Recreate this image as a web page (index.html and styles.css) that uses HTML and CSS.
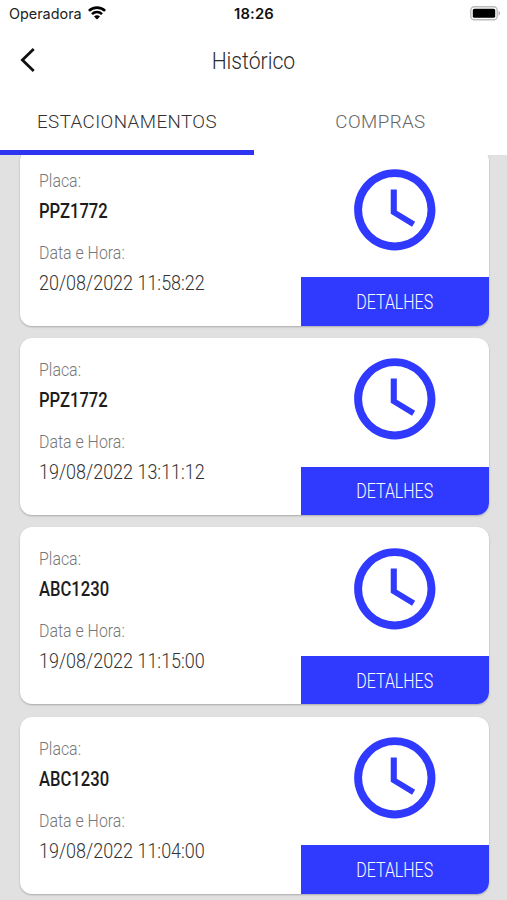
FILE: index.html
```html
<!DOCTYPE html>
<html lang="pt-BR">
<head>
<meta charset="utf-8">
<title>Histórico</title>
<link rel="stylesheet" href="styles.css">
</head>
<body>
<svg class="symbols" aria-hidden="true">
  <symbol id="clock" viewBox="0 0 24 24"><path d="M11.99 2C6.47 2 2 6.48 2 12s4.47 10 9.99 10C17.52 22 22 17.52 22 12S17.52 2 11.99 2zM12 20.05a8.05 8.05 0 1 1 0-16.1 8.05 8.05 0 0 1 0 16.1z"/><path d="M12.5 7H11v6l5.25 3.15.75-1.23-4.5-2.67z"/></symbol>
</svg>
<div class="screen">
  <header class="header">
    <div class="status">
      <div class="carrier"><span>Operadora</span>
        <svg class="wifi" viewBox="0 0 18 14" fill="none" stroke="#000" stroke-width="2.6"><path d="M.9 4.9C5.4.5 12.6.5 17.1 4.9"/><path d="M4 8.1c2.8-2.8 7.2-2.8 10 0"/><path d="M9 13.6 6 10.6a4.2 4.2 0 0 1 6 0z" fill="#000" stroke="none"/></svg>
      </div>
      <div class="time">18:26</div>
      <svg class="battery" viewBox="0 0 31 15"><rect x=".8" y=".8" width="26.4" height="13" rx="3.6" fill="#fff" stroke="#bbb" stroke-width="1.4"/><rect x="2.8" y="2.8" width="22.4" height="9" rx="1.6"/><path d="M28.6 5v4.6c1.9-.7 1.9-3.9 0-4.6z" fill="#aaa"/></svg>
    </div>
    <div class="nav">
      <svg class="back" viewBox="0 0 16 24" fill="none" stroke="#111" stroke-width="2.8"><path d="M13.7 1 2.4 12l11.3 11"/></svg>
      <h1 class="title"><span>Histórico</span></h1>
    </div>
    <nav class="tabs">
      <a class="tab active"><span>ESTACIONAMENTOS</span></a>
      <a class="tab"><span>COMPRAS</span></a>
    </nav>
  </header>
  <main class="list">
    <article class="card">
      <div class="info"><p class="label placa">Placa:</p><p class="plate">PPZ1772</p><p class="label data">Data e Hora:</p><p class="date">20/08/2022 11:58:22</p></div>
      <div class="side"><svg class="clock"><use href="#clock"/></svg><button class="details"><span>DETALHES</span></button></div>
    </article>
    <article class="card">
      <div class="info"><p class="label placa">Placa:</p><p class="plate">PPZ1772</p><p class="label data">Data e Hora:</p><p class="date">19/08/2022 13:11:12</p></div>
      <div class="side"><svg class="clock"><use href="#clock"/></svg><button class="details"><span>DETALHES</span></button></div>
    </article>
    <article class="card">
      <div class="info"><p class="label placa">Placa:</p><p class="plate">ABC1230</p><p class="label data">Data e Hora:</p><p class="date">19/08/2022 11:15:00</p></div>
      <div class="side"><svg class="clock"><use href="#clock"/></svg><button class="details"><span>DETALHES</span></button></div>
    </article>
    <article class="card">
      <div class="info"><p class="label placa">Placa:</p><p class="plate">ABC1230</p><p class="label data">Data e Hora:</p><p class="date">19/08/2022 11:04:00</p></div>
      <div class="side"><svg class="clock"><use href="#clock"/></svg><button class="details"><span>DETALHES</span></button></div>
    </article>
  </main>
</div>
</body>
</html>
```
FILE: styles.css
```css
* { box-sizing: border-box; }
body { margin: 0; font-family: Roboto, "Liberation Sans", sans-serif; background: #e1e1e1; }
h1, p { margin: 0; font-weight: 400; }
.symbols { display: none; }
.screen { width: 507px; height: 900px; overflow: hidden; display: flex; flex-direction: column; background: #e1e1e1; }
.header { flex: none; height: 155px; background: #fff; position: relative; z-index: 1; }

.status { height: 27px; display: grid; grid-template-columns: 1fr auto 1fr; align-items: center; padding: 0 6px 0 8px; font-family: Inter, sans-serif; }
.carrier { display: flex; align-items: center; gap: 6px; font-size: 14.4px; color: #222; padding-left: 1px; }
.wifi { width: 18px; height: 14px; margin-top: -2px; }
.time { font-size: 14.8px; font-weight: 600; color: #111; letter-spacing: .15px; margin-right: 1px; }
.battery { width: 31px; height: 15px; justify-self: end; margin-top: -1px; }

.nav { height: 67px; display: grid; grid-template-columns: 60px 1fr 60px; align-items: center; }
.back { width: 16px; height: 24px; margin: 0 0 2px 20px; }
.title { text-align: center; font-size: 23.5px; font-weight: 300; color: #2c2c2c; }
.title span { display: inline-block; transform: scaleX(.9); }

.tabs { height: 61px; display: grid; grid-template-columns: 254px 1fr; }
.tab { display: flex; align-items: center; justify-content: center; padding-bottom: 1px; border-bottom: 5px solid transparent; font-size: 18.75px; font-weight: 350; letter-spacing: .42px; color: #666; }
.tab.active { color: #333; border-color: #2e35f0; }

.list { flex: none; margin-top: -6.3px; padding: 0 18px 0 19.5px; display: flex; flex-direction: column; gap: 12.33px; }
.card { height: 177px; display: flex; background: #fff; border-radius: 12px; overflow: hidden; box-shadow: 0 1px 2px rgba(0, 0, 0, .25); }
.info { flex: 1; padding: 20px 0 0 19.5px; white-space: nowrap; }
.info p { transform-origin: left; width: max-content; }
.label { font-size: 17.7px; line-height: 24px; font-weight: 300; color: #777; }
.placa { transform: scaleX(.9); }
.plate { margin-top: 6px; font-size: 20px; line-height: 24px; font-weight: 500; color: #1c1c1c; transform: scaleX(.83); }
.data { margin-top: 18px; transform: scaleX(.9); }
.date { margin-top: 7px; font-size: 19.7px; line-height: 24px; font-weight: 300; color: #333; transform: scaleX(.913); }
.side { width: 188px; display: flex; flex-direction: column; align-items: center; justify-content: space-between; }
.clock { width: 97.6px; height: 97.6px; margin-top: 12.2px; fill: #303aff; }
.details { width: 100%; height: 48.5px; padding: 2px 0 0; border: 0; background: #303aff; color: #fff; font: 300 19.7px Roboto, sans-serif; }
.details span { display: inline-block; transform: translateX(-.7px) scaleX(.81); }
```
